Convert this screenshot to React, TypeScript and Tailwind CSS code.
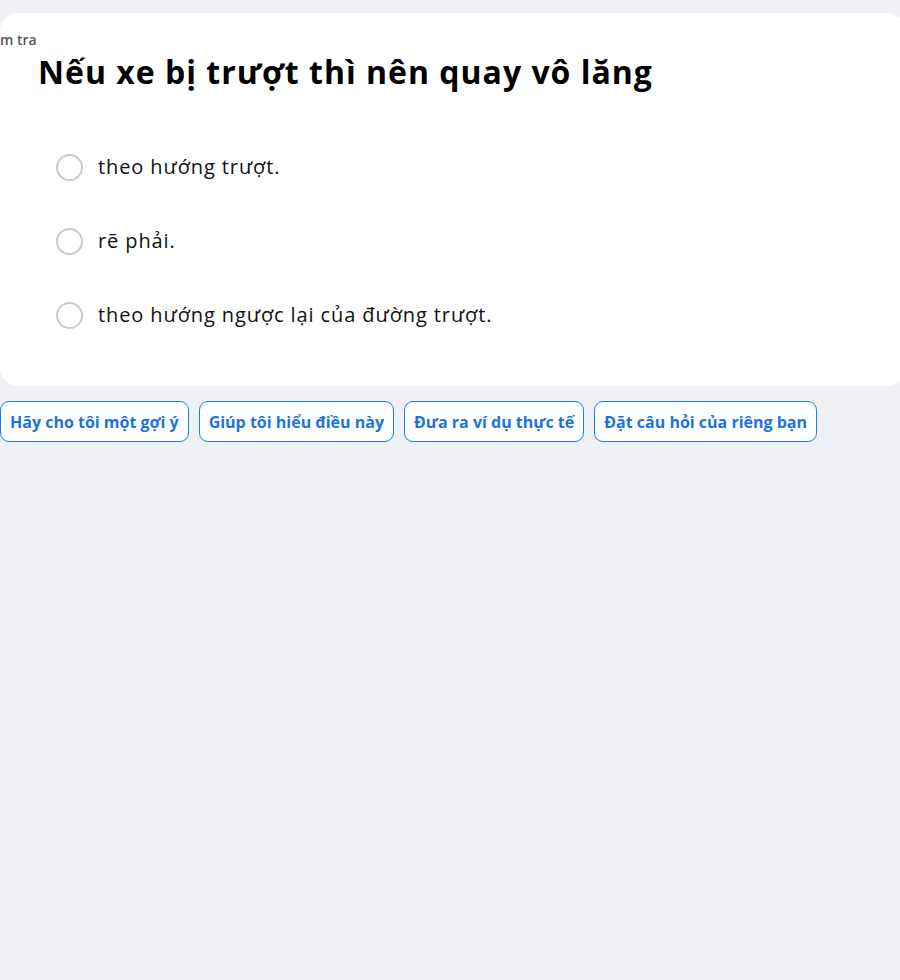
const options = [
  "theo hướng trượt.",
  "rẽ phải.",
  "theo hướng ngược lại của đường trượt.",
];

const prompts = [
  "Hãy cho tôi một gợi ý",
  "Giúp tôi hiểu điều này",
  "Đưa ra ví dụ thực tế",
  "Đặt câu hỏi của riêng bạn",
];

export default function App() {
  return (
    <div className="min-h-screen overflow-hidden bg-[#f0f1f6] pt-[13px] font-['Open_Sans',sans-serif]">
      <section className="w-[905px] rounded-[18px] bg-white pb-[34px] pt-[18px]">
        <p className="-ml-[21px] text-[14px] font-semibold leading-[17px] text-[#555461]">
          Kiểm tra
        </p>

        <h1 className="ml-[38px] mt-[4px] text-[32px] font-bold leading-[40px] tracking-[1px] text-black">
          Nếu xe bị trượt thì nên quay vô lăng
        </h1>

        <div className="ml-[56px] mt-[38px] flex flex-col">
          {options.map((option) => (
            <label
              key={option}
              className="flex h-[74px] cursor-pointer items-center gap-[15px]"
            >
              <span className="h-[27px] w-[27px] shrink-0 rounded-full border-2 border-[#c9c8d6] bg-white" />
              <span className="text-[20px] leading-[24px] tracking-[0.9px] text-[#111]">
                {option}
              </span>
            </label>
          ))}
        </div>
      </section>

      <div className="mt-[15px] flex gap-[10px]">
        {prompts.map((prompt) => (
          <button
            key={prompt}
            className="h-[41px] rounded-[9px] border border-[#1a7fe0] bg-white px-[9px] text-[16px] font-bold text-[#1b74dc]"
          >
            {prompt}
          </button>
        ))}
      </div>
    </div>
  );
}
